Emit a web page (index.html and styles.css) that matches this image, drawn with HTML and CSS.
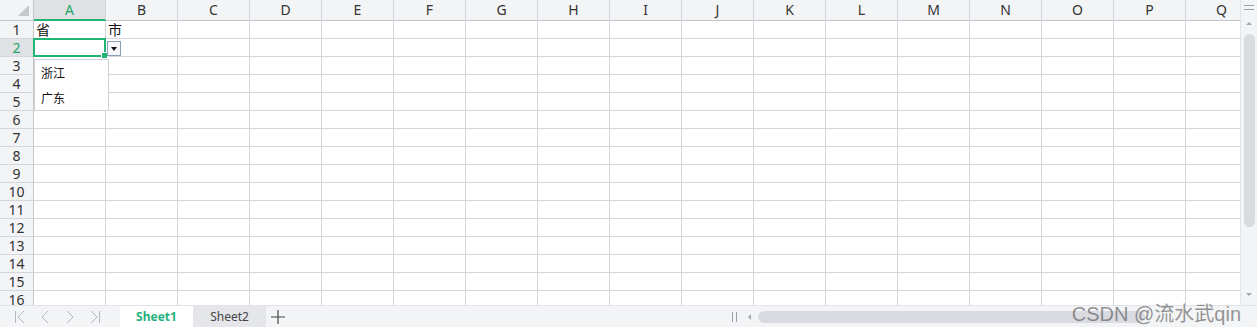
FILE: index.html
```html
<!DOCTYPE html>
<html lang="zh-CN">
<head>
    <meta charset="UTF-8">
    <title>Sheet</title>
    <link rel="stylesheet" href="styles.css">
</head>
<body>
    <div class="app">
        <div class="main">
            <div class="sheet">
                <div class="grid" id="grid"></div>
                <!-- selection of A2 with the validation list -->
                <div class="selection"><span class="handle"></span></div>
                <div class="drop-btn"><span class="caret"></span></div>
                <ul class="drop-list">
                    <li>浙江</li>
                    <li>广东</li>
                </ul>
            </div>
            <div class="vscroll">
                <div class="vgrip"></div>
                <div class="vup"></div>
                <div class="vthumb"></div>
                <div class="vdown"></div>
            </div>
        </div>
        <div class="tabbar">
            <div class="nav">
                <svg width="12" height="14" viewBox="0 0 12 14"><path d="M1.5 1v12M10 1 4 7l6 6" fill="none" stroke="#b4b7bd" stroke-width="1"/></svg>
                <svg width="12" height="14" viewBox="0 0 12 14"><path d="M9 1 3 7l6 6" fill="none" stroke="#b4b7bd" stroke-width="1"/></svg>
                <svg width="12" height="14" viewBox="0 0 12 14"><path d="M3 1l6 6-6 6" fill="none" stroke="#b4b7bd" stroke-width="1"/></svg>
                <svg width="12" height="14" viewBox="0 0 12 14"><path d="M10.5 1v12M2 1l6 6-6 6" fill="none" stroke="#b4b7bd" stroke-width="1"/></svg>
            </div>
            <div class="tab active">Sheet1</div>
            <div class="tab">Sheet2</div>
            <div class="add">
                <svg width="14" height="14" viewBox="0 0 14 14"><path d="M7 0v14M0 7h14" stroke="#444" stroke-width="1.2"/></svg>
            </div>
            <div class="hscroll">
                <span class="hgrip"></span>
                <span class="hleft"></span>
                <span class="hthumb"></span>
                <span class="mark">CSDN @流水武qin</span>
            </div>
        </div>
    </div>

    <script>
        const cols = 'ABCDEFGHIJKLMNOPQ'.split('');
        const values = { 'A1': '省', 'B1': '市' };
        const grid = document.getElementById('grid');

        function cell(cls, text) {
            const d = document.createElement('div');
            d.className = cls;
            if (text) d.textContent = text;
            grid.appendChild(d);
        }

        cell('corner');
        cols.forEach(c => cell(c === 'A' ? 'colhead sel' : 'colhead', c));

        for (let r = 1; r <= 16; r++) {
            cell(r === 2 ? 'rowhead sel' : 'rowhead', String(r));
            cols.forEach(c => cell('cell', values[c + r] || ''));
        }
    </script>
</body>
</html>
```

FILE: styles.css
```css
body {
    margin: 0;
    font-family: "Noto Sans", "Noto Sans CJK SC", sans-serif;
    font-size: 14px;
    color: #222;
    background: #fff;
    overflow: hidden;
}
.app {
    width: 1257px;
    height: 327px;
    display: flex;
    flex-direction: column;
}
.main {
    display: flex;
    height: 305px;
}
.sheet {
    position: relative;
    width: 1240px;
    overflow: hidden;
}
.grid {
    display: grid;
    grid-template-columns: 34px repeat(17, 72px);
    grid-template-rows: 21px repeat(16, 18px);
}
.grid > div {
    box-sizing: border-box;
    border-right: 1px solid #d5d6dc;
    border-bottom: 1px solid #d5d6dc;
    white-space: nowrap;
}
.corner {
    background: #f3f4f6;
    position: relative;
    border-right-color: #c4c6cc !important;
    border-bottom-color: #c4c6cc !important;
}
.corner::after {
    content: "";
    position: absolute;
    right: 4px;
    bottom: 4px;
    border-style: solid;
    border-width: 0 0 11px 11px;
    border-color: transparent transparent #c6c8cd transparent;
}
.colhead {
    background: #f3f4f6;
    text-align: center;
    line-height: 20px;
    color: #333;
    border-bottom-color: #c4c6cc !important;
}
.colhead.sel {
    background: #dfe1e5;
    color: #21a665;
    border-bottom: 2px solid #21b574 !important;
}
.rowhead {
    background: #f3f4f6;
    text-align: center;
    line-height: 17px;
    color: #333;
    border-right-color: #c4c6cc !important;
}
.rowhead.sel {
    background: #dfe1e5;
    color: #21a665;
}
.cell {
    padding-left: 2px;
    line-height: 17px;
    font-family: "Noto Sans CJK SC", sans-serif;
    color: #111;
}
.selection {
    position: absolute;
    left: 33px;
    top: 38px;
    width: 73px;
    height: 19px;
    box-sizing: border-box;
    border: 2px solid #21b574;
}
.handle {
    position: absolute;
    right: -4px;
    bottom: -4px;
    width: 5px;
    height: 5px;
    background: #21b574;
    border: 1px solid #fff;
}
.drop-btn {
    position: absolute;
    left: 107px;
    top: 41px;
    width: 14px;
    height: 15px;
    box-sizing: border-box;
    border: 1px solid #8d9db7;
    background: #f5f7fa;
}
.caret {
    position: absolute;
    left: 3px;
    top: 5px;
    border-style: solid;
    border-width: 4px 3.5px 0 3.5px;
    border-color: #111 transparent transparent transparent;
}
.drop-list {
    position: absolute;
    left: 34px;
    top: 59px;
    width: 75px;
    height: 52px;
    box-sizing: border-box;
    margin: 0;
    padding: 2px 0 0 6px;
    list-style: none;
    background: #fff;
    border: 1px solid #cfd0d4;
    font-family: "Noto Sans CJK SC", sans-serif;
    font-size: 12px;
    color: #111;
}
.drop-list li {
    height: 25px;
    line-height: 22px;
}
.vscroll {
    width: 17px;
    background: #f3f4f6;
    border-left: 1px solid #e2e3e6;
    box-sizing: border-box;
    position: relative;
}
.vgrip {
    margin: 5px auto 0;
    width: 10px;
    height: 3px;
    border-top: 1px solid #9ea1a8;
    border-bottom: 1px solid #9ea1a8;
}
.vup {
    margin: 12px auto 0;
    width: 0;
    border-style: solid;
    border-width: 0 3px 3px 3px;
    border-color: transparent transparent #a3a6ad transparent;
}
.vthumb {
    margin: 9px auto 0;
    width: 11px;
    height: 193px;
    border-radius: 6px;
    background: #d9dbe0;
}
.vdown {
    position: absolute;
    left: 5px;
    bottom: 9px;
    border-style: solid;
    border-width: 3px 3px 0 3px;
    border-color: #a3a6ad transparent transparent transparent;
}
.tabbar {
    height: 22px;
    display: flex;
    align-items: stretch;
    background: #f3f4f6;
    border-top: 1px solid #e2e3e6;
    box-sizing: border-box;
}
.nav {
    width: 120px;
    display: flex;
    align-items: center;
    gap: 13px;
    padding-left: 14px;
    box-sizing: border-box;
}
.nav svg {
    display: block;
}
.tab {
    width: 73px;
    font-size: 12px;
    line-height: 21px;
    text-align: center;
    color: #444;
    background: #e4e6ea;
}
.tab.active {
    background: #fff;
    color: #1fb37a;
    font-weight: bold;
}
.add {
    width: 24px;
    display: flex;
    align-items: center;
    justify-content: center;
}
.hscroll {
    flex: 1;
    display: flex;
    align-items: center;
    position: relative;
}
.hgrip {
    margin-left: 442px;
    width: 3px;
    height: 10px;
    border-left: 1px solid #9ea1a8;
    border-right: 1px solid #9ea1a8;
}
.hleft {
    margin-left: 11px;
    border-style: solid;
    border-width: 3px 3px 3px 0;
    border-color: transparent #a3a6ad transparent transparent;
}
.hthumb {
    margin-left: 7px;
    width: 387px;
    height: 12px;
    border-radius: 6px;
    background: #d9dbe0;
}
.mark {
    position: absolute;
    right: 16px;
    top: -3px;
    font-size: 20px;
    line-height: 22px;
    color: rgba(80, 80, 80, 0.6);
    font-family: "Liberation Sans", "Noto Sans CJK SC", sans-serif;
}
```
